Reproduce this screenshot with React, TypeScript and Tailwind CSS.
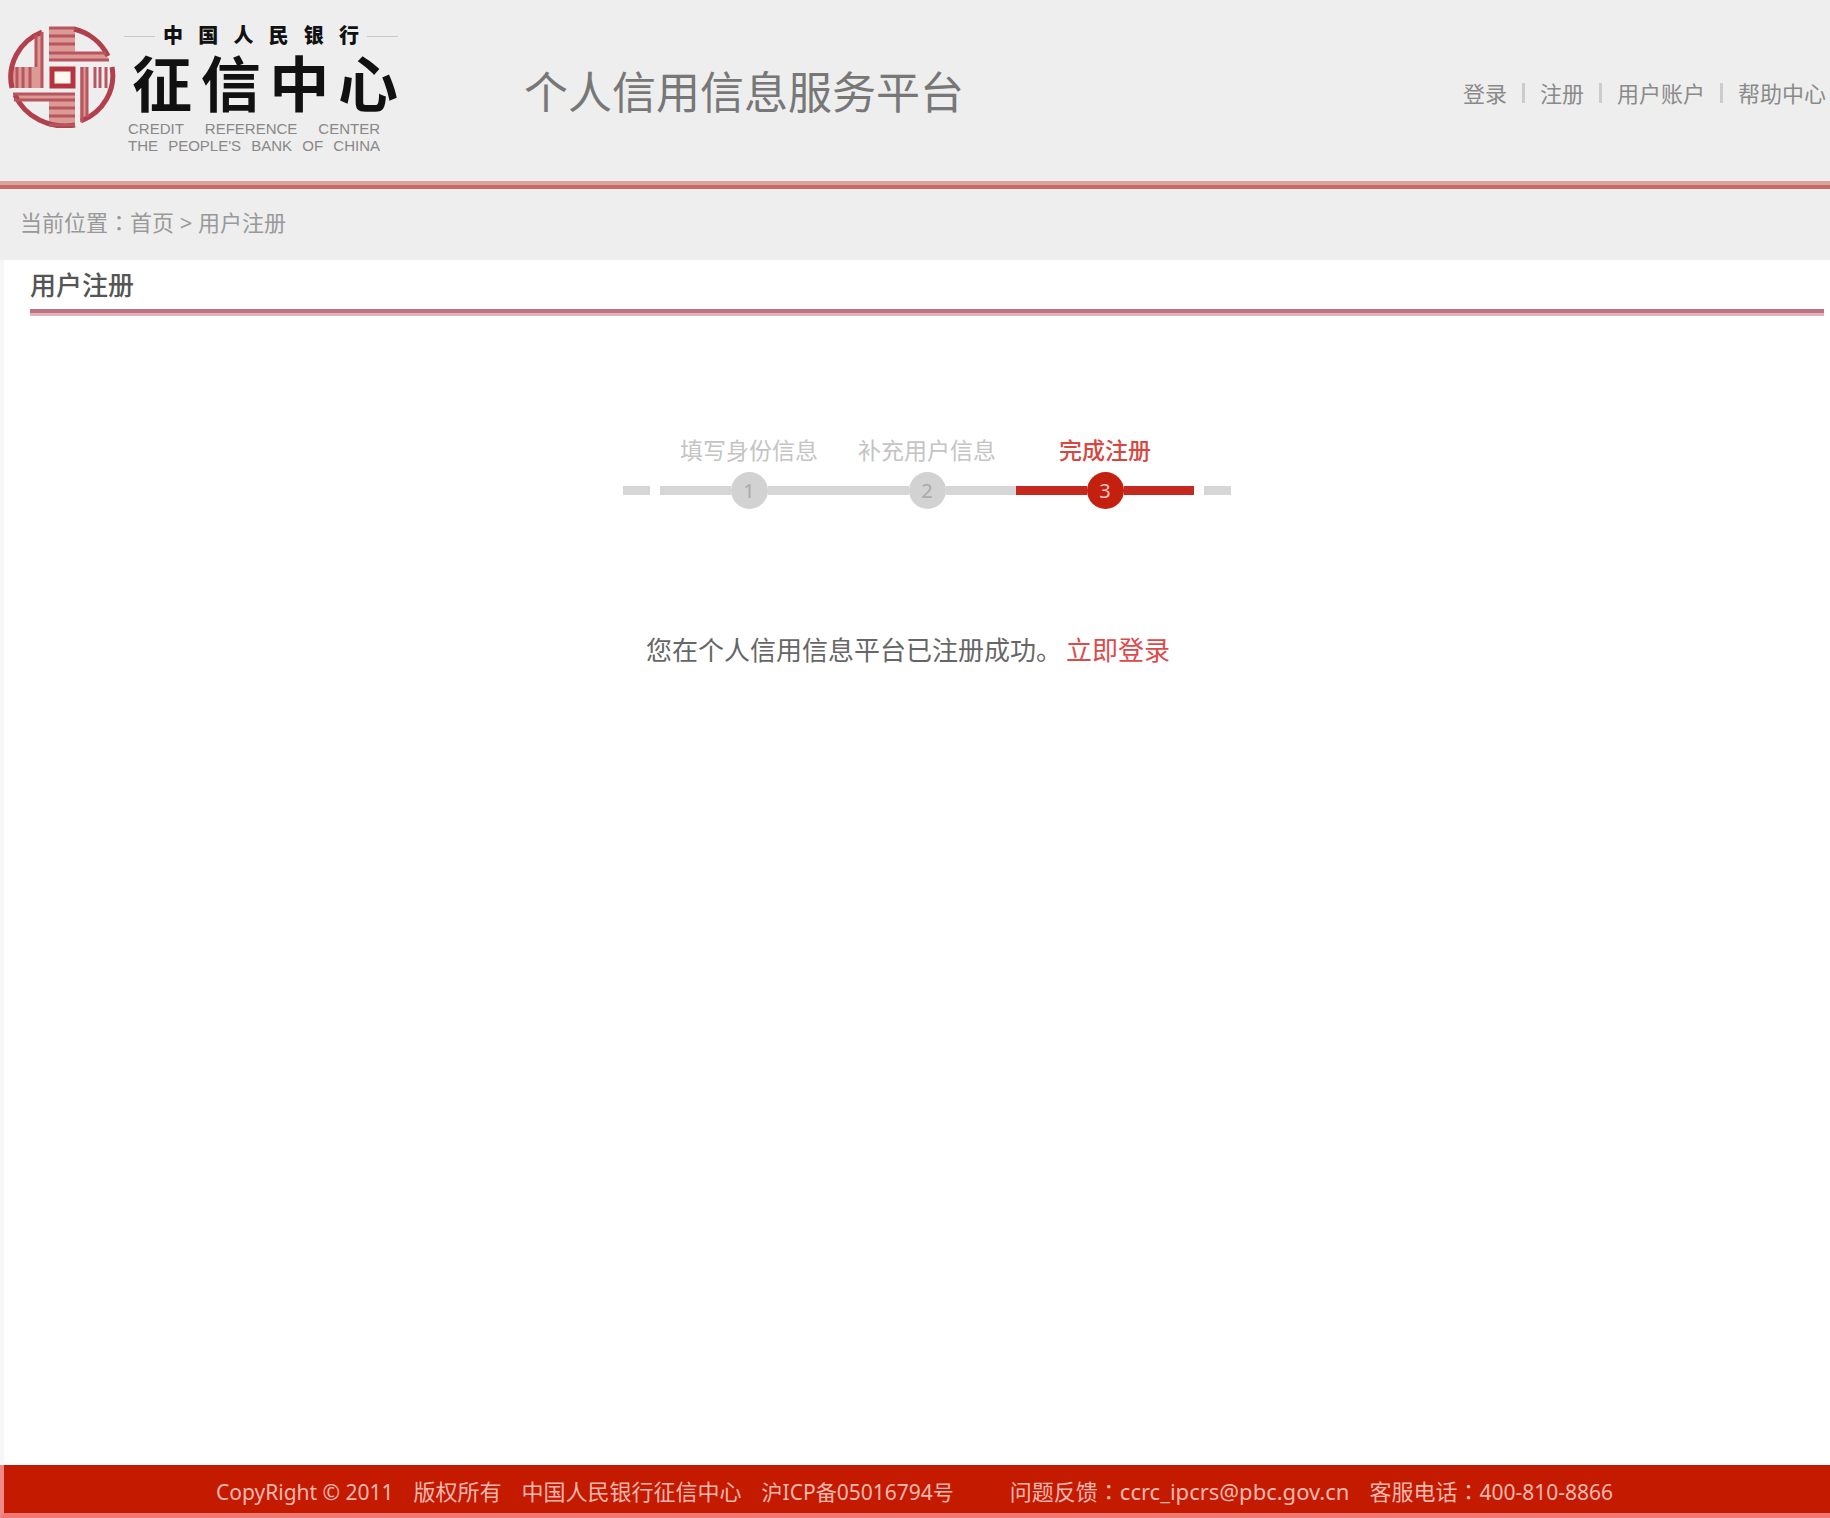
import React from "react";

const sans = "font-['Noto_Sans','Noto_Sans_CJK_SC',sans-serif]";

function Emblem() {
  return (
    <svg viewBox="0 0 108 104" className="h-[104px] w-[108px] shrink-0" fill="none" aria-hidden="true">
      <g fill="#dc9a94">
        <path d="M41 3H67V29H98L101 37H41Z" />
        <path d="M27 12L35 8V64H3L4 43H27Z" />
        <path d="M5 69H67V103H52L41 101V77H8Z" />
        <path d="M72 43H78V94L72 99Z" />
      </g>
      <g stroke="#b23f4c" strokeWidth="5">
        <path d="M34 8A51 49 0 0 0 4 64" />
        <path d="M66 5A52 49 0 0 1 100 32" />
        <path d="M104 43A51 49 0 0 1 73 97" />
        <path d="M67 101A54 51 0 0 1 7 71" />
      </g>
      <g stroke="#b85560" strokeWidth="3">
        <path d="M34 8V64M28 11V43M22 43V64M15 43V64M9 43V64" />
        <path d="M41 4H67M41 12H67M41 20H67M41 29H98M41 36H101" />
        <path d="M74 43V98M79 43V93M87 43V64M92 43V64M98 43V64" />
        <path d="M5 70H67M6 76H67M41 84H67M41 92H67M41 101H67" />
      </g>
      <rect x="44" y="45" width="21" height="17" fill="#fffaf0" stroke="#b53440" strokeWidth="5" />
    </svg>
  );
}

function Logo() {
  return (
    <a href="#" aria-label="中国人民银行征信中心" className="flex items-start">
      <Emblem />
      <div className="ml-2 flex w-[274px] flex-col text-[#111]">
        <div className="flex items-center gap-2">
          <span className="h-px flex-1 bg-[#c8c8c8]" />
          <span className="flex w-[196px] justify-between text-[20px] font-black leading-6">
            {["中", "国", "人", "民", "银", "行"].map((c) => (
              <span key={c}>{c}</span>
            ))}
          </span>
          <span className="h-px flex-1 bg-[#c8c8c8]" />
        </div>
        <div className="flex justify-between pl-2 text-[60px] font-bold leading-[72px]">
          {["征", "信", "中", "心"].map((c) => (
            <span key={c}>{c}</span>
          ))}
        </div>
        <div className="ml-1 flex w-[252px] flex-col font-['Liberation_Sans',sans-serif] text-[15px] leading-[17px] text-[#888]">
          <span className="flex justify-between">
            <span>CREDIT</span>
            <span>REFERENCE</span>
            <span>CENTER</span>
          </span>
          <span className="flex justify-between">
            <span>THE</span>
            <span>PEOPLE'S</span>
            <span>BANK</span>
            <span>OF</span>
            <span>CHINA</span>
          </span>
        </div>
      </div>
    </a>
  );
}

function Colon() {
  return <span className="font-['Noto_Sans_CJK_TC',sans-serif]" lang="zh-TW">：</span>;
}

const links = ["登录", "注册", "用户账户", "帮助中心"];

const steps = [
  { n: 1, label: "填写身份信息", active: false },
  { n: 2, label: "补充用户信息", active: false },
  { n: 3, label: "完成注册", active: true },
];

function Steps() {
  return (
    <div className="flex items-end justify-center gap-[10px]">
      <span className="mb-[14px] h-[9px] w-[27px] bg-[#d6d6d6]" />
      <ol className="flex">
        {steps.map((s) => (
          <li key={s.n} className="flex w-[178px] flex-col items-center">
            <span className={s.active ? "text-[23px] font-medium leading-[44px] text-[#d8473f]" : "text-[23px] leading-[44px] text-[#c4c4c4]"}>
              {s.label}
            </span>
            <span className="flex w-full items-center">
              <span className={s.active ? "h-[9px] flex-1 bg-[#c4281e]" : "h-[9px] flex-1 bg-[#d6d6d6]"} />
              <span
                className={
                  s.active
                    ? "flex size-[37px] items-center justify-center rounded-full bg-[#c4200f] text-[20px] text-[#f6c4c0]"
                    : "flex size-[37px] items-center justify-center rounded-full bg-[#d2d2d2] text-[20px] text-[#aaa]"
                }
              >
                {s.n}
              </span>
              <span className={s.active ? "h-[9px] flex-1 bg-[#c4281e]" : "h-[9px] flex-1 bg-[#d6d6d6]"} />
            </span>
          </li>
        ))}
      </ol>
      <span className="mb-[14px] h-[9px] w-[27px] bg-[#d6d6d6]" />
    </div>
  );
}

export default function App() {
  return (
    <div className={`flex min-h-screen flex-col bg-[#eee] ${sans}`} lang="zh-CN">
      <header className="flex border-b-4 border-[#c86a64] bg-[#eee]">
        <div className="flex h-[185px] w-full items-start border-b-4 border-[#d8a29f]">
          <div className="pl-2 pt-6">
            <Logo />
          </div>
          <h1 className="ml-[126px] pt-[60px] text-[44px] leading-[64px] text-[#777]">个人信用信息服务平台</h1>
          <nav className="ml-auto flex items-center gap-[15px] pr-1 pt-[77px] text-[22px] leading-8 text-[#8a8a8a]">
            {links.map((l, i) => (
              <React.Fragment key={l}>
                {i > 0 && <span className="h-5 w-[3px] bg-[#ccc]" />}
                <a href="#">{l}</a>
              </React.Fragment>
            ))}
          </nav>
        </div>
      </header>

      <nav aria-label="当前位置" className="h-[71px] pl-5 pt-4 text-[22px] leading-8 text-[#999]">
        当前位置<Colon /><a href="#">首页</a> &gt; <a href="#">用户注册</a>
      </nav>

      <main className="flex flex-1 flex-col border-l-4 border-[#f6f8f8] bg-white pl-[26px] pr-[6px]">
        <h2 className="border-b-4 border-[#bd7482] pb-1 pt-[5px] text-[26px] font-medium leading-[40px] text-[#555]">用户注册</h2>
        <div className="h-[3px] bg-[#e6b0b8]" />
        <div className="pt-[112px]">
          <Steps />
        </div>
        <p className="pr-[38px] pt-[121px] text-center text-[26px] leading-[40px] text-[#666]">
          您在个人信用信息平台已注册成功。
          <a href="#" className="ml-1 text-[#dc4a4a]">立即登录</a>
        </p>
      </main>

      <footer className="flex h-[53px] items-center border-b-[5px] border-l-4 border-b-[#f07872] border-l-[#f08a88] bg-[#c41a00] pl-[212px] pt-1 text-[#f8b8b0]">
        <div className="flex items-baseline whitespace-nowrap text-[22px] leading-8">
          <span className="text-[21px]">CopyRight © 2011</span>
          <span className="ml-5">版权所有</span>
          <span className="ml-5">中国人民银行征信中心</span>
          <span className="ml-5 text-[21px]">沪ICP备05016794号</span>
          <span className="ml-14">问题反馈<Colon /></span>
          <a href="#">ccrc_ipcrs@pbc.gov.cn</a>
          <span className="ml-5">客服电话<Colon /></span>
          <span className="text-[21px]">400-810-8866</span>
        </div>
      </footer>
    </div>
  );
}
